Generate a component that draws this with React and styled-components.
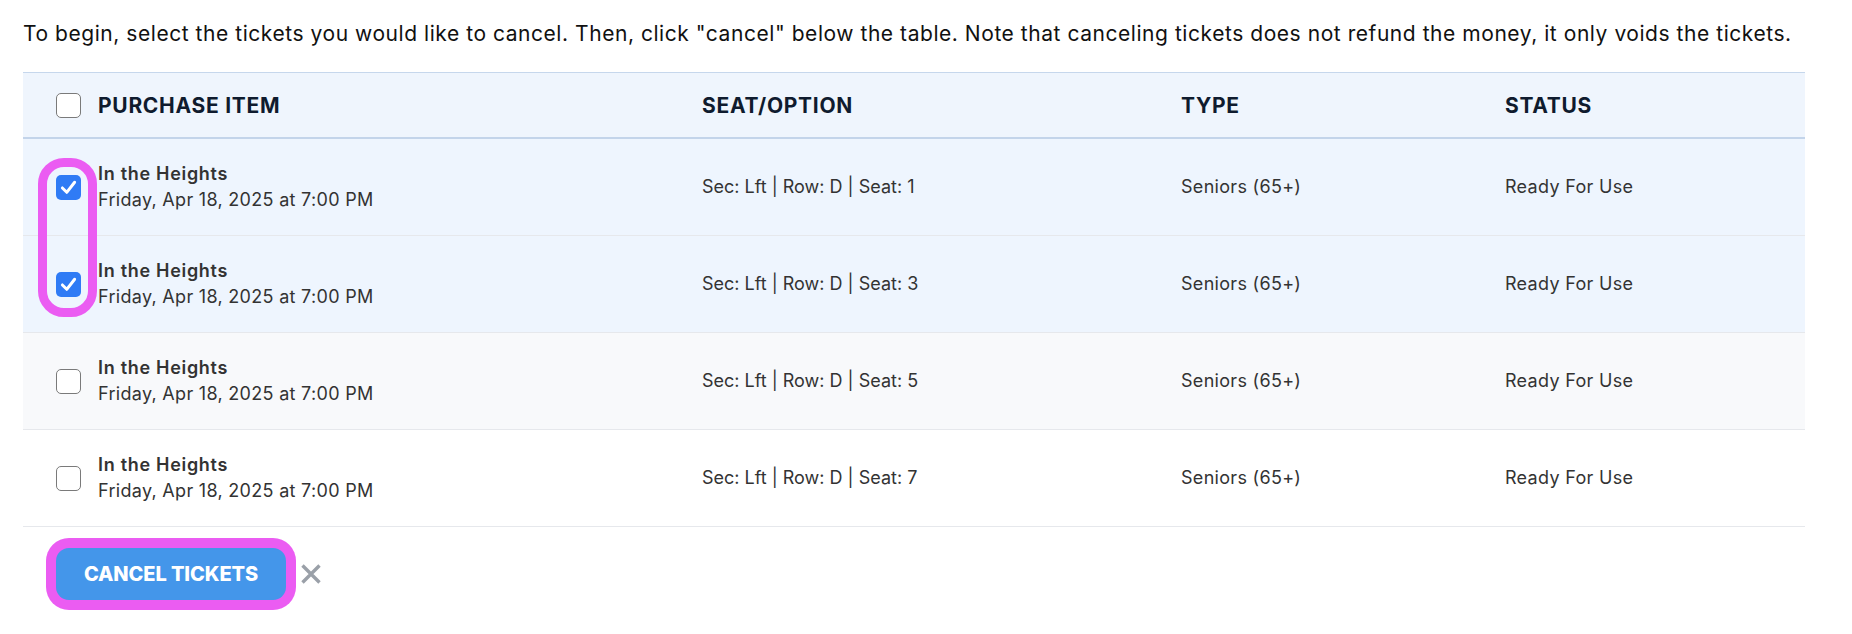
import React from "react";
import styled, { createGlobalStyle } from "styled-components";

const GlobalStyle = createGlobalStyle`
  html, body { margin: 0; padding: 0; background: #ffffff; }
  body { font-family: "Inter", "Open Sans", sans-serif; }
`;

const Page = styled.div`
  padding: 20px 47px 40px 23px;
`;

const Intro = styled.p`
  margin: 0 0 24px;
  font-size: 21px;
  line-height: 28px;
  letter-spacing: 0.55px;
  color: #111111;
`;

const TableWrap = styled.div`
  position: relative;
  border-top: 1px solid #c6d7ec;
`;

const cols = "679px 479px 324px 1fr";

const HeaderRow = styled.div`
  display: grid;
  grid-template-columns: ${cols};
  align-items: center;
  height: 64px;
  background: #eff5fd;
  border-bottom: 2px solid #c3d4ea;
`;

const HeadCell = styled.div`
  display: flex;
  align-items: center;
  gap: 17px;
  padding-left: ${(p) => (p.$first ? "33px" : "0")};
  font-size: 21px;
  font-weight: 700;
  letter-spacing: 0.7px;
  text-transform: uppercase;
  color: #0f1b2e;
`;

const Row = styled.div`
  display: grid;
  grid-template-columns: ${cols};
  align-items: center;
  height: 96px;
  background: ${(p) => p.$bg};
  border-bottom: 1px solid #e6e8ec;
`;

const Cell = styled.div`
  display: flex;
  align-items: center;
  gap: 17px;
  padding-left: ${(p) => (p.$first ? "33px" : "0")};
  font-size: 18px;
  line-height: 26px;
  letter-spacing: ${(p) => (p.$tight ? "0" : "0.3px")};
  color: #333333;
`;

const ItemText = styled.div`
  display: flex;
  flex-direction: column;
`;

const ItemTitle = styled.span`
  font-weight: 600;
  letter-spacing: 0.7px;
  color: #333333;
`;

const Box = styled.span`
  flex: none;
  display: inline-flex;
  align-items: center;
  justify-content: center;
  width: 25px;
  height: 25px;
  box-sizing: border-box;
  border-radius: 5px;
  background: ${(p) => (p.$checked ? "#2f7bf5" : "#ffffff")};
  border: ${(p) => (p.$checked ? "none" : "1.5px solid #7a7a7a")};
`;

const Highlight = styled.div`
  position: absolute;
  left: 15px;
  top: 85px;
  width: 59px;
  height: 159px;
  box-sizing: border-box;
  border: 9px solid #eb5cf2;
  border-radius: 26px;
  pointer-events: none;
`;

const Actions = styled.div`
  display: flex;
  align-items: center;
  gap: 15px;
  padding: 21px 0 0 33px;
`;

const CancelButton = styled.button`
  width: 230px;
  height: 52px;
  border: none;
  border-radius: 13px;
  background: #4496ea;
  color: #ffffff;
  font-family: "Inter", "Open Sans", sans-serif;
  font-size: 20px;
  font-weight: 800;
  letter-spacing: -0.1px;
  text-transform: uppercase;
  box-shadow: 0 0 0 10px #eb5cf2;
  cursor: pointer;
`;

const CloseIcon = styled.svg`
  width: 20px;
  height: 20px;
`;

function Checkbox({ checked }) {
  return (
    <Box $checked={checked}>
      {checked && (
        <svg width="21" height="21" viewBox="0 0 24 24" fill="none">
          <polyline
            points="5 12.5 10 17.5 19 6"
            stroke="#ffffff"
            strokeWidth="3.4"
            strokeLinecap="round"
            strokeLinejoin="round"
          />
        </svg>
      )}
    </Box>
  );
}

const rows = [
  { seat: 1, checked: true, bg: "#eef5fe" },
  { seat: 3, checked: true, bg: "#eef5fe" },
  { seat: 5, checked: false, bg: "#f8f9fb" },
  { seat: 7, checked: false, bg: "#ffffff" },
];

export default function App() {
  return (
    <>
      <GlobalStyle />
      <Page>
        <Intro>
          To begin, select the tickets you would like to cancel. Then, click
          "cancel" below the table. Note that canceling tickets does not refund
          the money, it only voids the tickets.
        </Intro>
        <TableWrap>
          <HeaderRow>
            <HeadCell $first>
              <Checkbox checked={false} />
              Purchase Item
            </HeadCell>
            <HeadCell>Seat/Option</HeadCell>
            <HeadCell>Type</HeadCell>
            <HeadCell>Status</HeadCell>
          </HeaderRow>
          {rows.map((r) => (
            <Row key={r.seat} $bg={r.bg}>
              <Cell $first>
                <Checkbox checked={r.checked} />
                <ItemText>
                  <ItemTitle>In the Heights</ItemTitle>
                  <span>Friday, Apr 18, 2025 at 7:00 PM</span>
                </ItemText>
              </Cell>
              <Cell $tight>Sec: Lft | Row: D | Seat: {r.seat}</Cell>
              <Cell>Seniors (65+)</Cell>
              <Cell>Ready For Use</Cell>
            </Row>
          ))}
          <Highlight />
        </TableWrap>
        <Actions>
          <CancelButton>Cancel Tickets</CancelButton>
          <CloseIcon viewBox="0 0 20 20" fill="none">
            <path
              d="M1.5 1.5 L18.5 18.5 M18.5 1.5 L1.5 18.5"
              stroke="#9aa0a8"
              strokeWidth="3.4"
            />
          </CloseIcon>
        </Actions>
      </Page>
    </>
  );
}
